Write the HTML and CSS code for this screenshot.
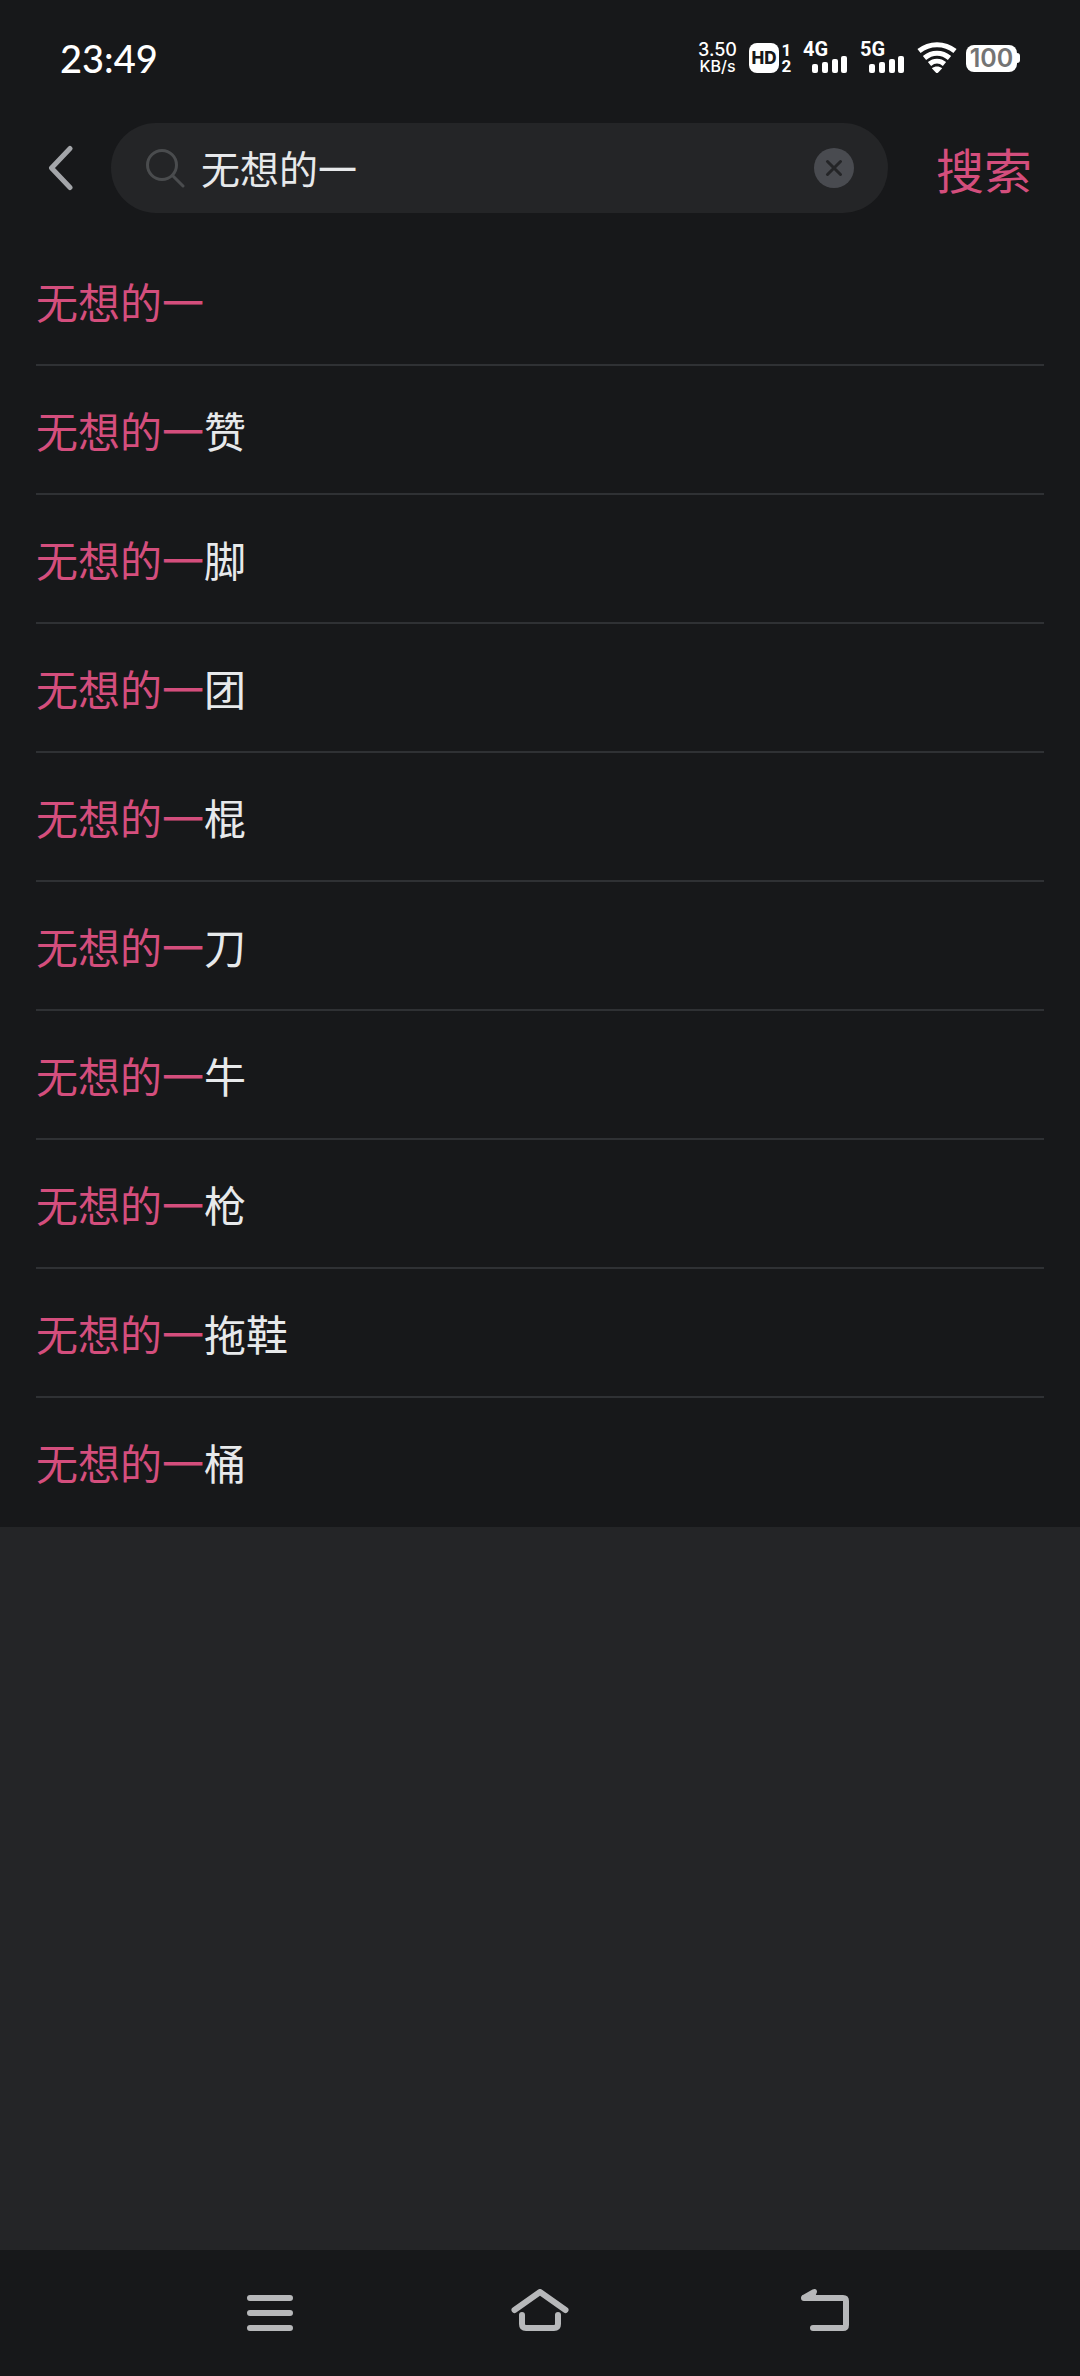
FILE: index.html
```html
<!DOCTYPE html>
<html lang="zh-CN">
<head>
<meta charset="utf-8">
<meta name="viewport" content="width=device-width, initial-scale=1">
<title>搜索</title>
<link rel="stylesheet" href="styles.css">
</head>
<body>
<div class="status-bar">
  <time class="clock">23:49</time>
  <div class="status-icons">
    <div class="net-speed"><span>3.50</span><span>KB/s</span></div>
    <div class="hd">
      <span class="hd-badge">HD</span>
      <span class="hd-sims"><span>1</span><span>2</span></span>
    </div>
    <div class="signal">
      <span class="signal-type">4G</span>
      <svg class="signal-bars" width="36" height="17" viewBox="0 0 36 17" aria-hidden="true"><rect x="0" y="8" width="6" height="9" rx="2"/><rect x="10" y="6" width="6" height="11" rx="2"/><rect x="20" y="3" width="6" height="14" rx="2"/><rect x="29" y="0" width="6" height="17" rx="2"/></svg>
    </div>
    <div class="signal">
      <span class="signal-type">5G</span>
      <svg class="signal-bars" width="36" height="17" viewBox="0 0 36 17" aria-hidden="true"><rect x="0" y="8" width="6" height="9" rx="2"/><rect x="10" y="6" width="6" height="11" rx="2"/><rect x="20" y="3" width="6" height="14" rx="2"/><rect x="29" y="0" width="6" height="17" rx="2"/></svg>
    </div>
    <svg class="wifi" width="40" height="32" viewBox="0 0 40 32" aria-hidden="true">
      <path d="M2 9C12.500 .5 27.500 .5 38 9M7.500 16C15 9.500 25 9.500 32.500 16M12.500 22C17 18.200 23 18.200 27.500 22" fill="none" stroke="#fff" stroke-width="5"/>
      <path d="M14.800 26.200C18 23.800 22 23.800 25.200 26.200L21.200 30.400Q20 31.400 18.800 30.400Z" fill="#fff"/>
    </svg>
    <div class="battery"><span class="battery-level">100</span><span class="battery-tip"></span></div>
  </div>
</div>

<form class="search-header">
  <button class="back" type="button" aria-label="返回">
    <svg width="26" height="46" viewBox="0 0 26 46"><path d="M22 3.500 3.500 23 22 42.500" fill="none" stroke="#a3a5a9" stroke-width="5" stroke-linecap="round" stroke-linejoin="round"/></svg>
  </button>
  <div class="search-field">
    <svg class="magnifier" width="40" height="40" viewBox="0 0 40 40" aria-hidden="true"><g fill="none" stroke="#4a4c4e" stroke-width="3" stroke-linecap="round"><circle cx="17" cy="17" r="14.500"/><path d="M27.500 27.500 38 38"/></g></svg>
    <input class="search-input" type="text" value="无想的一" aria-label="搜索">
    <button class="clear" type="button" aria-label="清除">
      <svg width="40" height="40" viewBox="0 0 40 40"><circle cx="20" cy="20" r="20" fill="#494b50"/><path d="M13.500 13.500 26.500 26.500M26.500 13.500 13.500 26.500" stroke="#242527" stroke-width="3" stroke-linecap="round"/></svg>
    </button>
  </div>
  <button class="submit" type="submit">搜索</button>
</form>

<main class="results">
  <ul class="suggestions">
    <li><a href="#"><em>无想的一</em></a></li>
    <li><a href="#"><em>无想的一</em>赞</a></li>
    <li><a href="#"><em>无想的一</em>脚</a></li>
    <li><a href="#"><em>无想的一</em>团</a></li>
    <li><a href="#"><em>无想的一</em>棍</a></li>
    <li><a href="#"><em>无想的一</em>刀</a></li>
    <li><a href="#"><em>无想的一</em>牛</a></li>
    <li><a href="#"><em>无想的一</em>枪</a></li>
    <li><a href="#"><em>无想的一</em>拖鞋</a></li>
    <li><a href="#"><em>无想的一</em>桶</a></li>
  </ul>
</main>

<nav class="system-nav">
  <button type="button" aria-label="最近任务">
    <svg width="60" height="48" viewBox="0 0 60 48"><path d="M10 9H50M10 24H50M10 39H50" fill="none" stroke="#b7b8ba" stroke-width="6" stroke-linecap="round"/></svg>
  </button>
  <button type="button" aria-label="主屏幕">
    <svg width="60" height="48" viewBox="0 0 60 48"><path d="M4.500 21 30 3 55.500 21M12 26V35Q12 39 16 39H44Q48 39 48 35V26" fill="none" stroke="#b7b8ba" stroke-width="6" stroke-linecap="round" stroke-linejoin="round"/></svg>
  </button>
  <button type="button" aria-label="返回上一页">
    <svg width="90" height="48" viewBox="0 0 90 48"><path d="M39 9H78Q81 9 81 12V36Q81 39 78 39H48" fill="none" stroke="#b7b8ba" stroke-width="6" stroke-linecap="round" stroke-linejoin="round"/><path d="M37 6.500 47.500 .5Q52 -1 52 3L50 8L39 12Z" fill="#b7b8ba"/></svg>
  </button>
</nav>
</body>
</html>
```
FILE: styles.css
```css
* {
  box-sizing: border-box;
}

:root {
  --surface: #17181a;
  --raised: #242527;
  --line: #2f3134;
  --text: #e7e9eb;
  --pink: #d44e7d;
}

body {
  margin: 0;
  min-height: 100vh;
  display: flex;
  flex-direction: column;
  background: var(--surface);
  color: var(--text);
  font-family: "Noto Sans CJK SC", sans-serif;
}

button {
  padding: 0;
  border: 0;
  background: none;
  color: inherit;
  font: inherit;
  cursor: pointer;
}

svg {
  display: block;
}

/* Status bar */
.status-bar {
  display: flex;
  align-items: center;
  justify-content: space-between;
  height: 108px;
  padding: 8px 60px 0;
  color: #fff;
}

.clock {
  font: 500 38px/48px Lato, sans-serif;
}

.status-icons {
  display: flex;
  align-items: center;
}

.net-speed {
  display: flex;
  flex-direction: column;
  align-items: center;
  margin-right: 12px;
  font: 500 18px/16px Inter, sans-serif;
}

.net-speed span + span {
  font-size: 16px;
}

.hd {
  display: flex;
  gap: 2px;
  margin-right: 11px;
}

.hd-badge {
  width: 30px;
  border-radius: 8px;
  background: #fff;
  color: var(--surface);
  font: 800 17px/30px Inter, sans-serif;
  text-align: center;
}

.hd-sims {
  display: flex;
  flex-direction: column;
  justify-content: space-between;
  align-items: center;
  width: 11px;
  font: 700 17px/14px Roboto, sans-serif;
}

.signal {
  display: flex;
  flex-direction: column;
  width: 45px;
  height: 30px;
  margin-right: 12px;
}

.signal-type {
  font: 700 20px/13px Roboto, sans-serif;
}

.signal-bars {
  align-self: flex-end;
  flex: none;
  fill: #fff;
}

.wifi {
  margin-right: 9px;
}

.battery {
  display: flex;
  align-items: center;
}

.battery-level {
  width: 51px;
  border-radius: 8px;
  background: #fff;
  color: #747474;
  font: 600 25px/27px Inter, sans-serif;
  text-align: center;
}

.battery-tip {
  width: 3px;
  height: 10px;
  border-radius: 0 3px 3px 0;
  background: #fff;
}

/* Search header */
.search-header {
  display: flex;
  align-items: center;
  padding: 15px 48px 24px;
}

.back {
  margin-right: 37px;
}

.search-field {
  flex: 1;
  display: flex;
  align-items: center;
  min-width: 0;
  height: 90px;
  padding: 0 34px;
  border-radius: 45px;
  background: var(--raised);
}

.magnifier {
  flex: none;
  margin-right: 16px;
}

.search-input {
  flex: 1;
  min-width: 0;
  padding: 0 0 2px;
  border: 0;
  outline: 0;
  background: none;
  color: var(--text);
  font: 39px/56px "Noto Sans CJK SC", sans-serif;
}

.submit {
  margin-left: 48px;
  color: var(--pink);
  font-size: 48px;
  line-height: 72px;
}

/* Suggestions */
.results {
  flex: 1;
  background: var(--raised);
}

.suggestions {
  margin: 0;
  padding: 0 36px;
  list-style: none;
  background: var(--surface);
}

.suggestions li {
  border-bottom: 2px solid var(--line);
}

.suggestions li:last-child {
  border-bottom-color: transparent;
}

.suggestions a {
  display: block;
  padding: 34px 0;
  color: inherit;
  font: 42px/59px "Noto Sans CJK SC", sans-serif;
  text-decoration: none;
}

.suggestions em {
  color: var(--pink);
  font-style: normal;
}

/* System navigation */
.system-nav {
  display: grid;
  grid-template-columns: repeat(3, 25%);
  justify-content: center;
  align-items: center;
  height: 126px;
}

.system-nav button {
  justify-self: center;
}
```
